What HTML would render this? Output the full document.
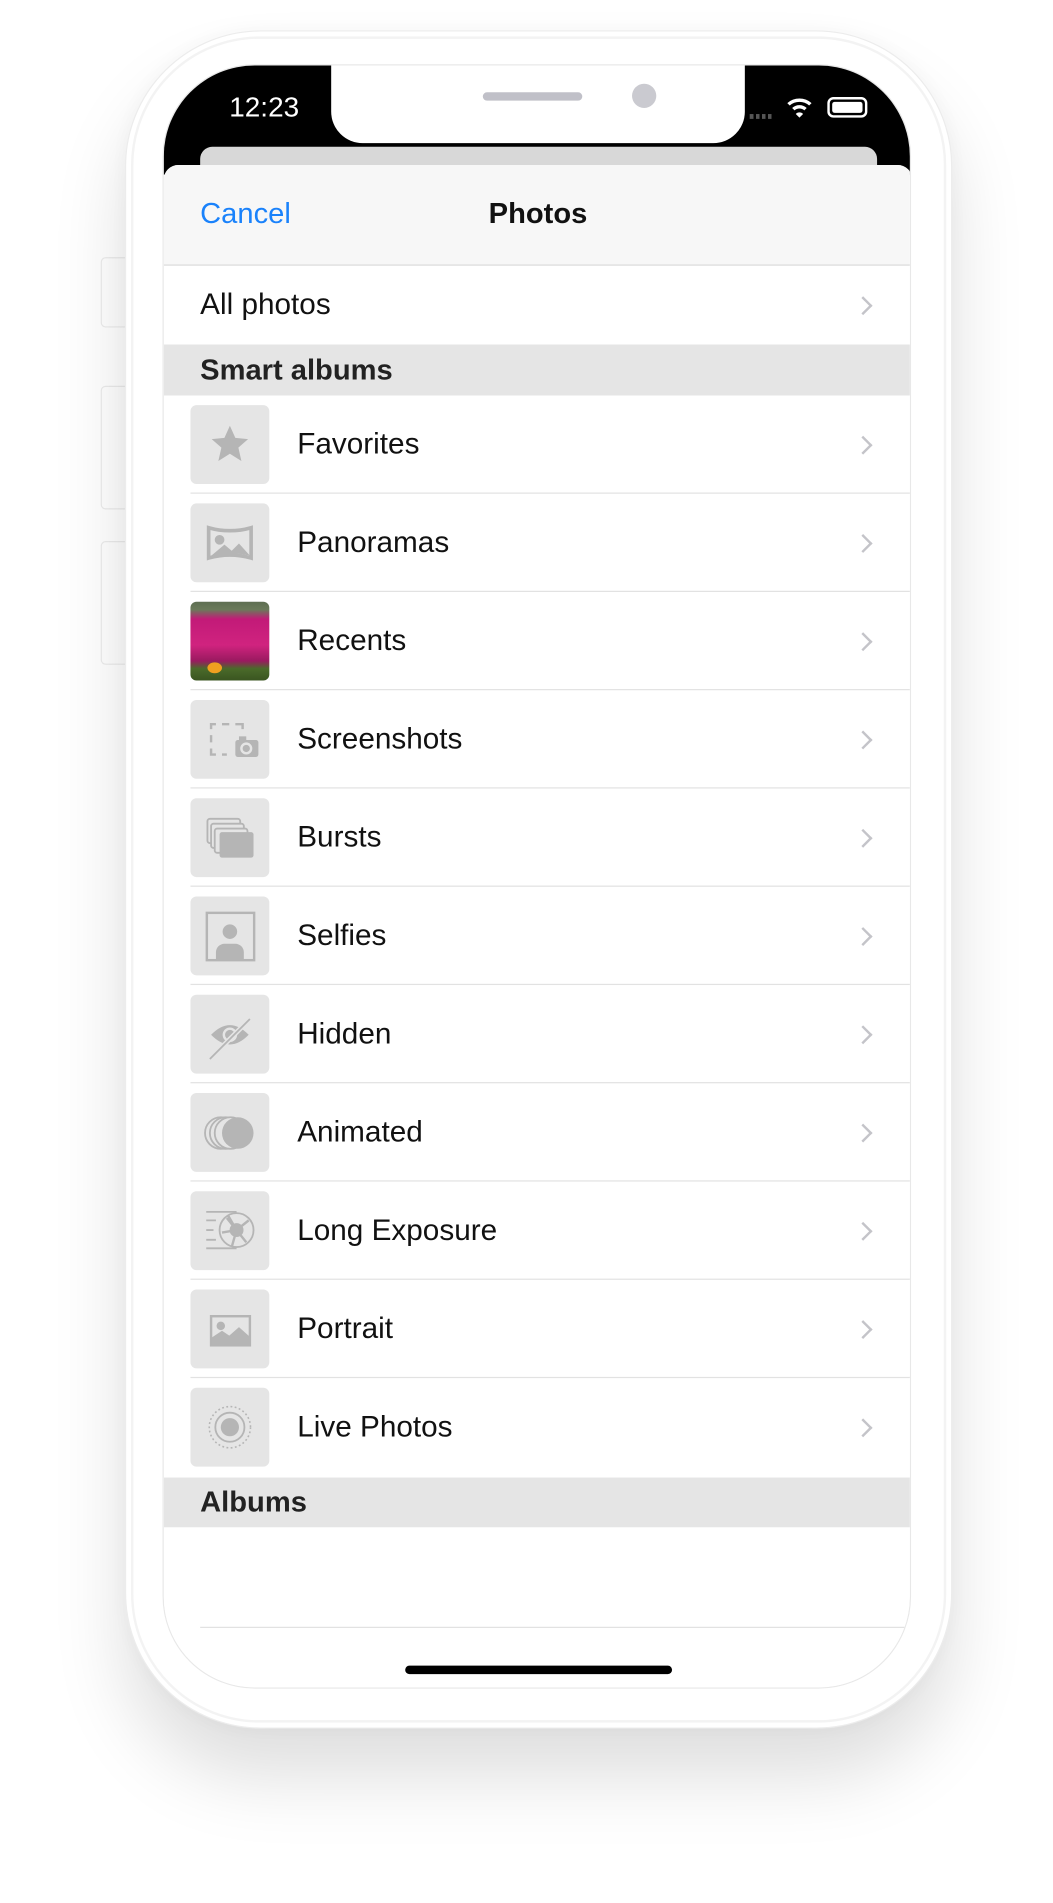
<!DOCTYPE html>
<html><head><meta charset="utf-8"><style>
*{margin:0;padding:0;box-sizing:border-box}
html,body{width:1053px;height:1903px;overflow:hidden;background:#fff}
#w{position:absolute;left:0;top:0;width:868px;height:1569px;transform:scale(1.2131);transform-origin:0 0;font-family:"Liberation Sans",sans-serif}
.btn{position:absolute;left:83px;width:24px;background:#fff;border:1px solid #ececec;border-radius:4px}
#phone{position:absolute;left:103px;top:25px;width:682px;height:1400px;border-radius:112px;background:#fff;border:1px solid #ececec;box-shadow:0 40px 60px rgba(0,0,0,.13),0 0 20px rgba(0,0,0,.04)}
#inner{position:absolute;left:108px;top:30px;width:672px;height:1390px;border-radius:106px;border:2px solid #f3f3f3}
#screen{position:absolute;left:134px;top:53px;width:617px;height:1339px;border-radius:76px;background:#fff;overflow:hidden;border:1px solid #e8e8e8}
#status{position:absolute;left:0;top:0;width:617px;height:90px;background:#000}
#notch{position:absolute;left:138px;top:0;width:341px;height:64px;background:#fff;border-radius:0 0 26px 26px}
#sheet{position:absolute;left:0;top:82px;width:617px;height:1260px;background:#fff;border-radius:12px 12px 0 0;overflow:hidden}
.nav{height:83px;background:#f7f7f7;border-bottom:1px solid #dcdcdc;position:relative}
.row{position:relative;height:81px;font-size:24.5px;color:#111}
.row .ic{position:absolute;left:22px;top:8px;width:65px;height:65px;border-radius:5px;background:#e5e5e5;overflow:hidden}
.row .t{position:absolute;left:110px;top:0;line-height:81px}
.row .sep{position:absolute;left:22px;right:0;bottom:0;height:1px;background:#e2e2e2}
.chev{position:absolute;right:35px;top:50%;width:11px;height:11px;border-right:2px solid #c4c4c9;border-top:2px solid #c4c4c9;transform:translateY(-50%) rotate(45deg)}
.hdr{height:42px;background:#e5e5e5;font-size:24px;font-weight:bold;color:#222;padding-left:30px;line-height:43px}
svg{display:block}
</style></head><body><div id="w">
<div class="btn" style="top:212px;height:58px"></div>
<div class="btn" style="top:318px;height:102px"></div>
<div class="btn" style="top:446px;height:102px"></div>
<div id="phone"></div>
<div id="inner"></div>
<div id="screen">
 <div id="status"></div>
 <div id="notch"></div>
 <div style="position:absolute;left:263px;top:22px;width:82px;height:7px;border-radius:4px;background:#c0c0c8"></div>
 <div style="position:absolute;left:386px;top:15px;width:20px;height:20px;border-radius:50%;background:#cacad0"></div>
 <div style="position:absolute;left:54px;top:21px;color:#fff;font-size:23px;">12:23</div>
 <div style="position:absolute;left:483px;top:40px;width:20px;height:4px;background:repeating-linear-gradient(90deg,#555 0 3px,transparent 3px 5px)"></div>
 <svg style="position:absolute;left:513px;top:24px" width="22" height="20" viewBox="0 0 22 20"><path d="M1 7a15 15 0 0 1 20 0l-2 2a12 12 0 0 0-16 0z M5 11a9 9 0 0 1 12 0l-2 2a6 6 0 0 0-8 0z M11 19l-3-3a4 4 0 0 1 6 0z" fill="#fff"/></svg>
 <div style="position:absolute;left:547px;top:26px;width:33px;height:17px;border:2px solid #fff;border-radius:5px"><div style="margin:2px;height:9px;background:#fff;border-radius:2px"></div></div>
 <div style="position:absolute;left:30px;top:67px;width:558px;height:30px;background:#d8d8d8;border-radius:10px"></div>
 <div id="sheet">
  <div class="nav"><span style="position:absolute;left:30px;top:27px;font-size:24px;color:#1a82fb">Cancel</span><span style="position:absolute;left:0;right:0;text-align:center;top:27px;font-size:24px;font-weight:bold;color:#111">Photos</span></div>
  <div class="row" style="height:65px"><span class="t" style="left:30px;line-height:65px">All photos</span><i class="chev"></i></div>
  <div class="hdr">Smart albums</div>
  <div class="row"><div class="ic"><svg width="65" height="65"><path d="M32.5 17l4.5 10 10.5 1-8 7 2.5 11-9.5-6-9.5 6 2.5-11-8-7 10.5-1z" fill="#b5b5b5"/></svg></div><span class="t">Favorites</span><i class="chev"></i><div class="sep"></div></div>
  <div class="row"><div class="ic"><svg width="65" height="65"><path d="M15 20q17.5 5 35 0v25q-17.5-5-35 0z" fill="none" stroke="#b5b5b5" stroke-width="3"/><circle cx="24" cy="30" r="4" fill="#b5b5b5"/><path d="M16 44l12-10 6 5 6-6 9 10q-17-4-33 1z" fill="#b5b5b5"/></svg></div><span class="t">Panoramas</span><i class="chev"></i><div class="sep"></div></div>
  <div class="row"><div class="ic" style="background:linear-gradient(180deg,#5e6e52 0,#6a7a5a 10%,#c21a78 22%,#d0237f 55%,#9a1a60 75%,#4a6a2a 85%,#3a5520 100%)"><div style="position:absolute;left:14px;top:50px;width:12px;height:9px;border-radius:50%;background:#f0a020"></div></div><span class="t">Recents</span><i class="chev"></i><div class="sep"></div></div>
  <div class="row"><div class="ic"><svg width="65" height="65"><path d="M17 24v-4h4M26 20h6M37 20h6v4M17 29v6M17 40v5h4M26 45h4" fill="none" stroke="#b5b5b5" stroke-width="2"/><rect x="37" y="33" width="19" height="14" rx="2" fill="#b5b5b5"/><rect x="40" y="30" width="6" height="4" fill="#b5b5b5"/><circle cx="46" cy="40" r="4" fill="none" stroke="#e5e5e5" stroke-width="2"/></svg></div><span class="t">Screenshots</span><i class="chev"></i><div class="sep"></div></div>
  <div class="row"><div class="ic"><svg width="65" height="65"><rect x="14" y="17" width="27" height="20" rx="2" fill="none" stroke="#b5b5b5" stroke-width="1.5"/><rect x="17" y="21" width="27" height="20" rx="2" fill="#e5e5e5" stroke="#b5b5b5" stroke-width="1.5"/><rect x="20" y="25" width="27" height="20" rx="2" fill="#e5e5e5" stroke="#b5b5b5" stroke-width="1.5"/><rect x="24" y="28" width="28" height="21" rx="2" fill="#b5b5b5"/></svg></div><span class="t">Bursts</span><i class="chev"></i><div class="sep"></div></div>
  <div class="row"><div class="ic"><svg width="65" height="65"><rect x="13.5" y="13.5" width="39" height="39" fill="none" stroke="#b5b5b5" stroke-width="2"/><circle cx="32.5" cy="29" r="6" fill="#b5b5b5"/><path d="M21 52v-6a7 7 0 0 1 7-7h9a7 7 0 0 1 7 7v6z" fill="#b5b5b5"/></svg></div><span class="t">Selfies</span><i class="chev"></i><div class="sep"></div></div>
  <div class="row"><div class="ic"><svg width="65" height="65"><path d="M17 33q15.5-16 31 0q-15.5 16-31 0z" fill="#b5b5b5"/><circle cx="32.5" cy="33" r="5" fill="none" stroke="#e5e5e5" stroke-width="2"/><path d="M16 53l33-33" stroke="#e5e5e5" stroke-width="4"/><path d="M16 53l33-33" stroke="#b5b5b5" stroke-width="1.5"/></svg></div><span class="t">Hidden</span><i class="chev"></i><div class="sep"></div></div>
  <div class="row"><div class="ic"><svg width="65" height="65"><circle cx="25" cy="33" r="13" fill="none" stroke="#b5b5b5" stroke-width="1.5"/><circle cx="29" cy="33" r="13" fill="#e5e5e5" stroke="#b5b5b5" stroke-width="1.5"/><circle cx="33" cy="33" r="13" fill="#e5e5e5" stroke="#b5b5b5" stroke-width="1.5"/><circle cx="39" cy="33" r="13" fill="#b5b5b5"/></svg></div><span class="t">Animated</span><i class="chev"></i><div class="sep"></div></div>
  <div class="row"><div class="ic"><svg width="65" height="65" fill="none" stroke="#b5b5b5" stroke-width="1.5"><circle cx="38" cy="32" r="14"/><path d="M13 17h25M13 47h25M13 24h8M13 32h6M13 40h8"/><path d="M31 20l7 12M48 24l-10 8M46 42l-8-10M34 46l4-14M26 34l12-2M30 22l8 10" stroke-width="2"/><circle cx="38" cy="32" r="5" fill="#b5b5b5"/></svg></div><span class="t">Long Exposure</span><i class="chev"></i><div class="sep"></div></div>
  <div class="row"><div class="ic"><svg width="65" height="65"><rect x="17" y="22" width="32" height="24" fill="none" stroke="#b5b5b5" stroke-width="2"/><circle cx="25" cy="30" r="3.5" fill="#b5b5b5"/><path d="M17 46v-6l9-6 6 4 8-7 9 8v7z" fill="#b5b5b5"/></svg></div><span class="t">Portrait</span><i class="chev"></i><div class="sep"></div></div>
  <div class="row"><div class="ic"><svg width="65" height="65"><circle cx="32.5" cy="32.5" r="17" fill="none" stroke="#b5b5b5" stroke-width="1.3" stroke-dasharray="1.5 2"/><circle cx="32.5" cy="32.5" r="12" fill="none" stroke="#b5b5b5" stroke-width="1.5"/><circle cx="32.5" cy="32.5" r="7.5" fill="#b5b5b5"/></svg></div><span class="t">Live Photos</span><i class="chev"></i></div>
  <div class="hdr" style="margin-top:1px;height:41px;line-height:42px">Albums</div>
  <div style="position:absolute;left:30px;right:0;top:1205px;height:1px;background:#e2e2e2"></div>
 </div>
 <div style="position:absolute;left:199px;top:1319px;width:220px;height:7px;border-radius:4px;background:#000"></div>
</div>
</div></body></html>
